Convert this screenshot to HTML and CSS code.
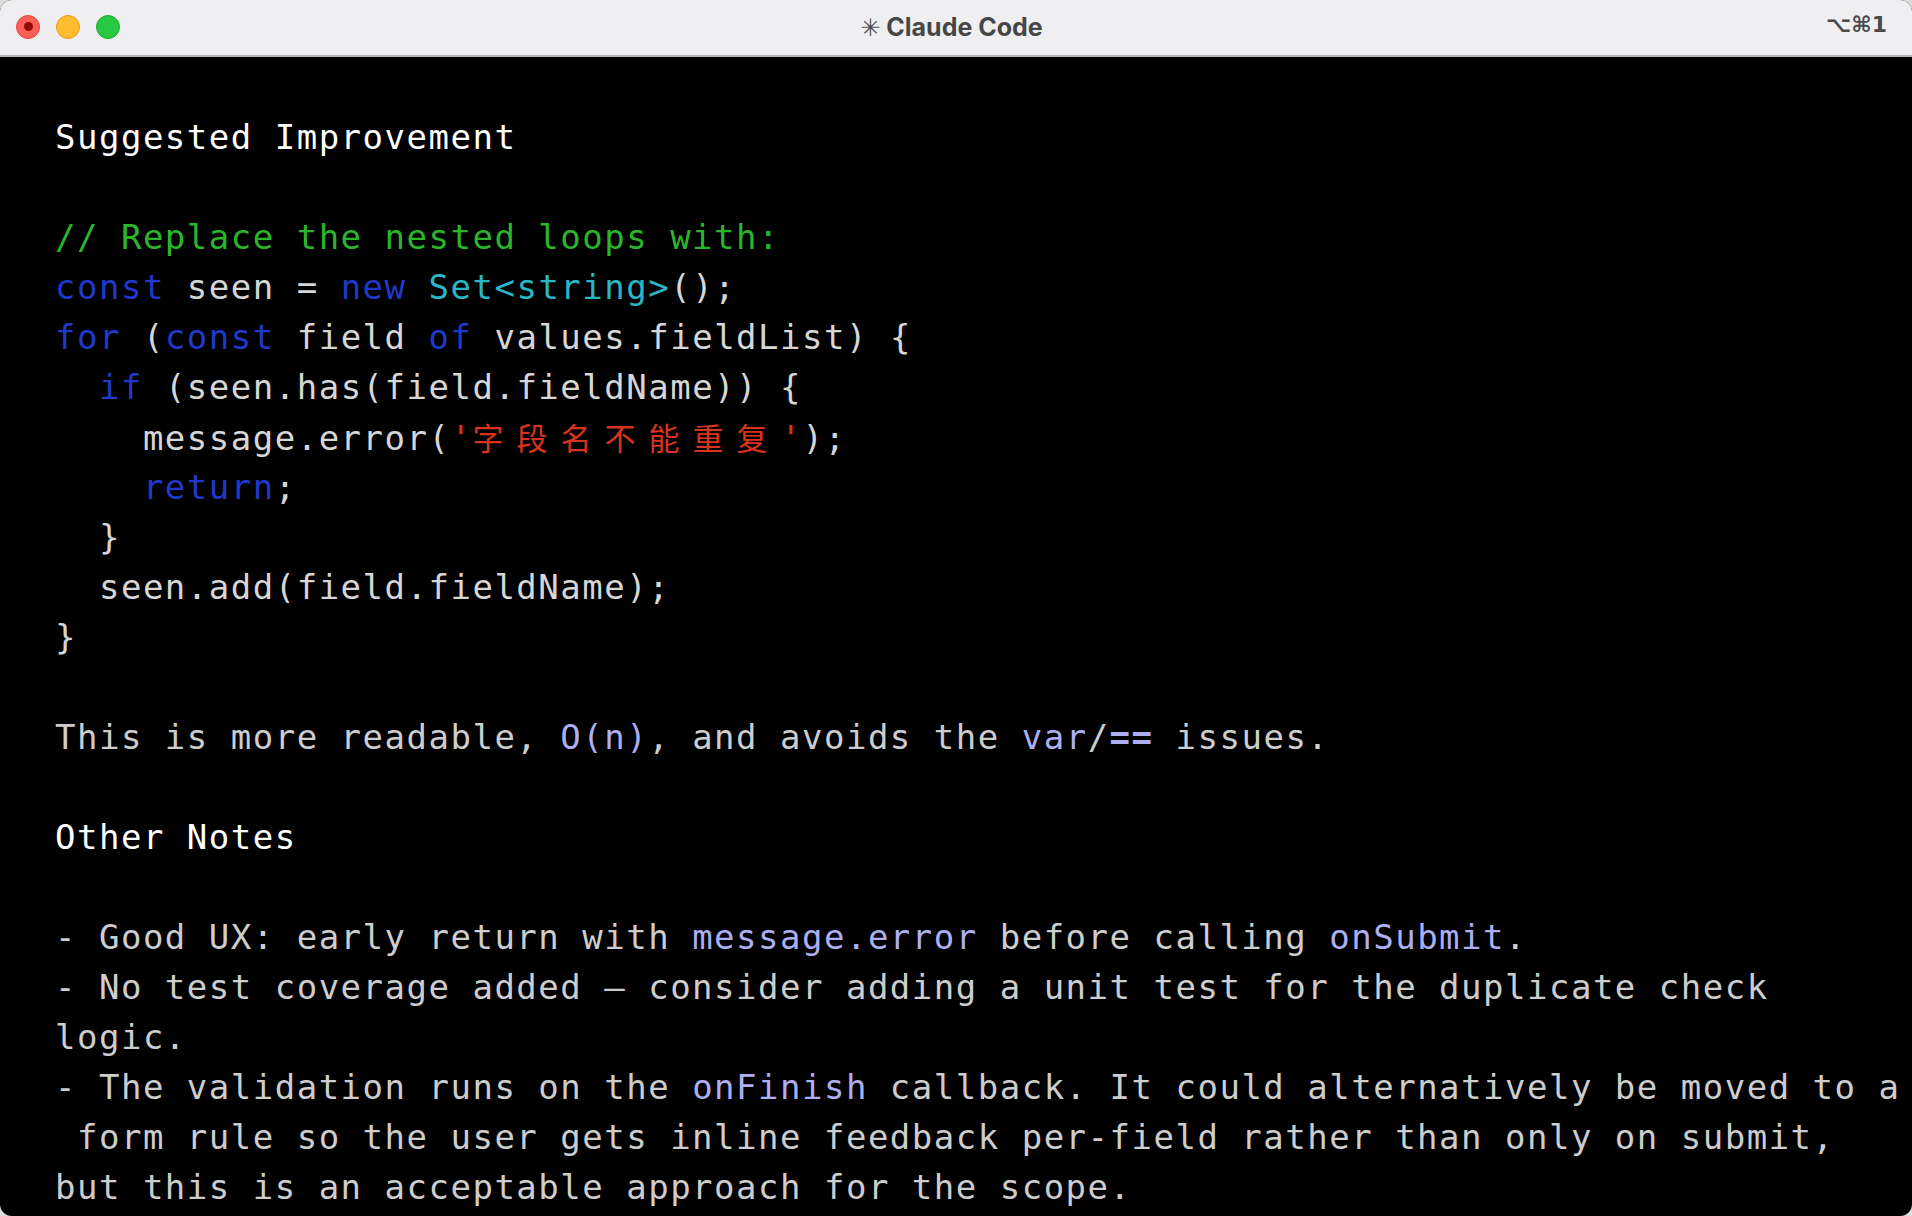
FILE: index.html
```html
<!DOCTYPE html>
<html lang="en">
<head>
<meta charset="utf-8">
<title>Claude Code</title>
<link rel="stylesheet" href="styles.css">
</head>
<body>
<div class="window">
  <header class="titlebar">
    <div class="lights">
      <span class="light close"><span class="dot"></span></span>
      <span class="light min"></span>
      <span class="light max"></span>
    </div>
    <div class="title"><span class="spark">✳</span> Claude Code</div>
    <div class="shortcut">⌥⌘1</div>
  </header>
  <main class="term">
    <div class="ln head">Suggested Improvement</div>
    <div class="ln"> </div>
    <div class="ln"><span class="cm">// Replace the nested loops with:</span></div>
    <div class="ln"><span class="kw">const</span> seen = <span class="kw">new</span> <span class="ty">Set&lt;string&gt;</span>();</div>
    <div class="ln"><span class="kw">for</span> (<span class="kw">const</span> field <span class="kw">of</span> values.fieldList) {</div>
    <div class="ln">  <span class="kw">if</span> (seen.has(field.fieldName)) {</div>
    <div class="ln">    message.error(<span class="str">'<span class="cjk">字段名不能重复</span>'</span>);</div>
    <div class="ln">    <span class="kw">return</span>;</div>
    <div class="ln">  }</div>
    <div class="ln">  seen.add(field.fieldName);</div>
    <div class="ln">}</div>
    <div class="ln"> </div>
    <div class="ln txt">This is more readable, <span class="ic">O(n)</span>, and avoids the <span class="ic">var</span>/<span class="ic eq">==</span> issues.</div>
    <div class="ln"> </div>
    <div class="ln head">Other Notes</div>
    <div class="ln"> </div>
    <div class="ln txt">- Good UX: early return with <span class="ic">message.error</span> before calling <span class="ic">onSubmit</span>.</div>
    <div class="ln txt">- No test coverage added – consider adding a unit test for the duplicate check</div>
    <div class="ln txt">logic.</div>
    <div class="ln txt">- The validation runs on the <span class="ic">onFinish</span> callback. It could alternatively be moved to a</div>
    <div class="ln txt"> form rule so the user gets inline feedback per-field rather than only on submit,</div>
    <div class="ln txt">but this is an acceptable approach for the scope.</div>
  </main>
</div>
</body>
</html>
```
FILE: styles.css
```css
* { box-sizing: border-box; }
html, body {
  margin: 0;
  padding: 0;
  height: 100%;
  background: #dcdcdc;
  overflow: hidden;
}
.window {
  height: 1216px;
  width: 1912px;
  display: flex;
  flex-direction: column;
  border-radius: 12px;
  overflow: hidden;
  background: #000;
}
.titlebar {
  height: 57px;
  flex: none;
  display: grid;
  grid-template-columns: 1fr auto 1fr;
  align-items: center;
  background: #efeff1;
  border-bottom: 2px solid #b8b8ba;
  padding: 0 25px 0 16px;
  font-family: Inter, "DejaVu Sans", sans-serif;
}
.lights {
  display: flex;
  gap: 16px;
  align-items: center;
  margin-top: -2px;
}
.light {
  width: 24px;
  height: 24px;
  border-radius: 50%;
  display: flex;
  align-items: center;
  justify-content: center;
}
.close { background: #ff5f57; border: 1px solid #e2463f; }
.min { background: #febc2e; border: 1px solid #e1a116; }
.max { background: #28c840; border: 1px solid #1aab29; }
.dot {
  width: 9px;
  height: 9px;
  border-radius: 50%;
  background: #8f0a05;
}
.title {
  font-size: 25px;
  font-weight: 700;
  color: #464646;
  margin-top: -2px;
}
.spark {
  font-family: "DejaVu Sans", sans-serif;
  font-weight: 400;
  color: #505050;
  font-size: 24px;
}
.shortcut {
  justify-self: end;
  font-family: "DejaVu Sans", sans-serif;
  font-weight: 700;
  font-size: 22px;
  color: #4a4a4a;
  margin-top: -6px;
}
.term {
  flex: 1;
  padding: 55px 0 0 55px;
  font-family: "DejaVu Sans Mono", monospace;
  font-size: 34px;
  letter-spacing: 1.5px;
  color: #d6d6d6;
}
.ln {
  height: 50px;
  line-height: 50px;
  white-space: pre;
}
.head { color: #ffffff; }
.txt { color: #cdcdcd; }
.cm { color: #2ab52a; }
.kw { color: #1f3acb; }
.ty { color: #2bb6c8; }
.str { color: #d9321f; }
.cjk {
  font-family: "Noto Sans CJK SC", sans-serif;
  font-size: 31px;
  letter-spacing: 13px;
}
.ic { color: #aeaef2; }
.eq { font-weight: 700; }
```
